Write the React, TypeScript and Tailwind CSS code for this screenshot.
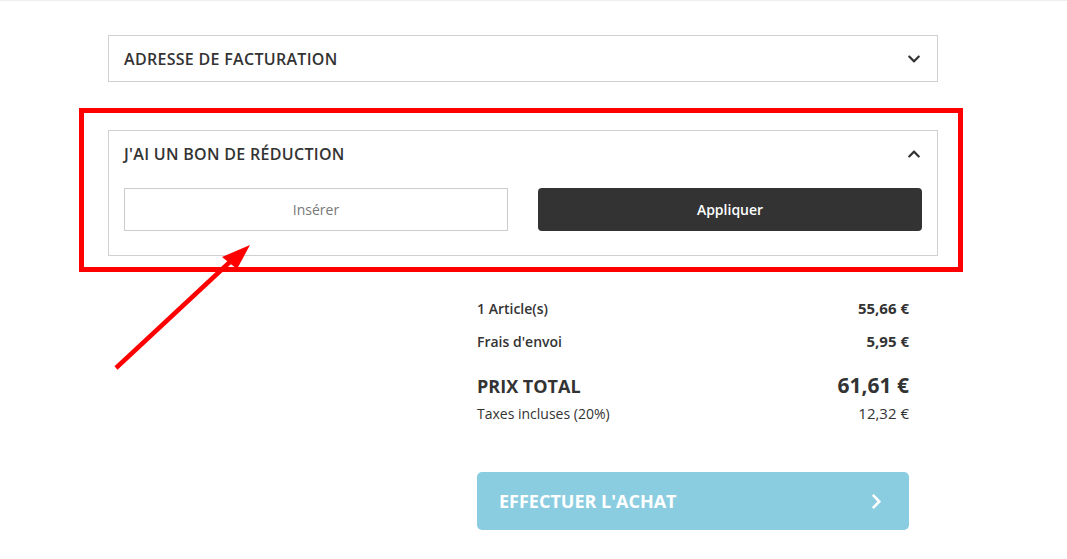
import React from "react";
import { FaChevronDown, FaChevronUp, FaChevronRight } from "react-icons/fa";

// récap panier : adresse, bon de réduction, totaux
export default function App() {
  const [code, setCode] = React.useState("");

  return (
    <div
      className="relative w-[1067px] h-[559px] bg-white border-t border-[#eeeeee] overflow-hidden text-[#333]"
      style={{ fontFamily: '"Open Sans", "Liberation Sans", sans-serif' }}
    >
      <div className="ml-[108px] w-[830px] pt-[34px]">
        {/* Adresse */}
        <div className="border border-[#d0d0d0]">
          <div className="h-[45px] flex items-center justify-between px-[15px]">
            <span className="text-[16px] font-semibold uppercase tracking-[0.3px]">Adresse de facturation</span>
            <FaChevronDown className="w-[14px] h-[14px] mr-[1px]" />
          </div>
        </div>

        {/* Bon de réduction */}
        <div className="mt-[48px] border border-[#d0d0d0]">
          <div className="h-[45px] flex items-center justify-between px-[15px]">
            <span className="text-[16px] font-semibold uppercase tracking-[0.3px]">J'ai un bon de réduction</span>
            <FaChevronUp className="w-[14px] h-[14px] mr-[1px]" />
          </div>
          <div className="mt-[12px] px-[15px] pb-[24px] flex gap-[30px]">
            <input
              value={code}
              onChange={(e) => setCode(e.target.value)}
              placeholder="Insérer"
              className="w-[384px] h-[43px] border border-[#cccccc] text-center text-[14px] outline-none placeholder:text-[#777]"
            />
            <button className="w-[384px] h-[43px] rounded-[4px] bg-[#333333] text-white text-[14px] font-semibold">
              Appliquer
            </button>
          </div>
        </div>

        {/* Totaux */}
        <div className="ml-[369px] w-[432px] mt-[36px]">
          <div className="h-[33px] flex items-center justify-between">
            <span className="text-[14px] font-semibold">1 Article(s)</span>
            <span className="text-[15px] font-bold">55,66 €</span>
          </div>
          <div className="h-[33px] flex items-center justify-between">
            <span className="text-[14px] font-semibold">Frais d'envoi</span>
            <span className="text-[15px] font-bold">5,95 €</span>
          </div>
          <div className="mt-[13px] h-[30px] flex items-center justify-between">
            <span className="text-[18px] font-bold">PRIX TOTAL</span>
            <span className="text-[21px] font-bold">61,61 €</span>
          </div>
          <div className="h-[24px] flex items-center justify-between">
            <span className="text-[14px]">Taxes incluses (20%)</span>
            <span className="text-[15px] font-medium">12,32 €</span>
          </div>
          <button className="mt-[47px] w-full h-[58px] rounded-[5px] bg-[#8bcde0] text-white flex items-center justify-between pl-[22px] pr-[24px]">
            <span className="text-[18px] font-bold uppercase">Effectuer l'achat</span>
            <FaChevronRight className="w-[17px] h-[17px]" />
          </button>
        </div>
      </div>

      {/* annotation rouge */}
      <div className="absolute left-[79px] top-[107px] w-[884px] h-[164px] border-[5px] border-[#ff0000] pointer-events-none" />
      <svg className="absolute left-0 top-0 pointer-events-none" width="1067" height="559">
        <line x1="116" y1="367" x2="232" y2="259" stroke="#ff0000" strokeWidth="4.5" />
        <polygon points="250,244 222,256 237,268" fill="#ff0000" />
      </svg>
    </div>
  );
}
